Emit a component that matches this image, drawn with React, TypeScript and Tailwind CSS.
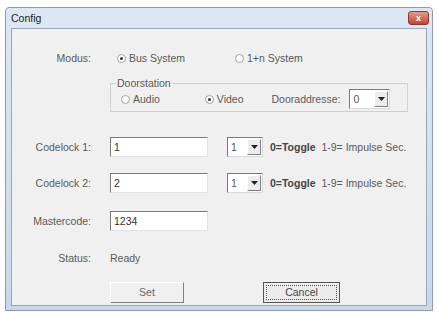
import React from "react";

const Radio: React.FC<{ checked?: boolean; label: string }> = ({ checked, label }) => (
  <div className="flex items-center">
    <span className="flex h-[9px] w-[9px] items-center justify-center rounded-full border border-[#a0a0a0] bg-white">
      {checked && <span className="h-[3px] w-[3px] rounded-full bg-[#333]" />}
    </span>
    <span className="ml-[3px]">{label}</span>
  </div>
);

const Select: React.FC<{ value: string; width: string }> = ({ value, width }) => (
  <div
    className={`flex h-[20px] ${width} items-center border border-t-[#7a7a7a] border-l-[#7a7a7a] border-r-[#d8d8d8] border-b-[#d8d8d8] bg-white pl-[3px]`}
  >
    <span className="flex-1 text-[#555]">{value}</span>
    <span className="mr-[1px] flex h-[16px] w-[14px] items-center justify-center border border-t-[#fff] border-l-[#fff] border-r-[#808080] border-b-[#808080] bg-[#ececec]">
      <svg width="7" height="4" viewBox="0 0 7 4">
        <path d="M0 0h7L3.5 4z" fill="#222" />
      </svg>
    </span>
  </div>
);

const TextBox: React.FC<{ value: string }> = ({ value }) => (
  <div className="flex h-[20px] w-[98px] items-center border border-t-[#7a7a7a] border-l-[#7a7a7a] border-r-[#e2e2e2] border-b-[#e2e2e2] bg-white pl-[3px] text-[#333]">
    {value}
  </div>
);

const Label: React.FC<{ children: React.ReactNode }> = ({ children }) => (
  <div className="w-[79px] shrink-0 text-right">{children}</div>
);

export default function App() {
  return (
    <div
      className="h-[312px] w-[437px] bg-white pl-[5px] pt-[7px] text-[10.5px] leading-[13px] text-[#5a5a5a]"
      style={{ fontFamily: '"Liberation Sans", Arial, sans-serif' }}
    >
      <div className="flex h-[304px] w-[428px] flex-col rounded-t-[4px] border border-[#8c9db3] bg-gradient-to-b from-[#dde8f4] to-[#c8d8ea]">
        {/* Title bar */}
        <div className="flex h-[20px] items-center justify-between pl-[5px] pr-[3px]">
          <span className="text-[#222]">Config</span>
          <span className="flex h-[14px] w-[21px] items-center justify-center rounded-[3px] border border-[#8a3a30] bg-gradient-to-b from-[#e59a8a] to-[#c4412f] text-[9px] font-bold text-white">
            x
          </span>
        </div>

        {/* Client area */}
        <div className="mx-[5px] mb-[4px] flex-1 border border-[#98a8bc] bg-[#f0f0f0]">
          {/* Modus */}
          <div className="mt-[22px] flex h-[14px] items-center">
            <Label>Modus:</Label>
            <div className="ml-[26px] flex items-center">
              <Radio checked label="Bus System" />
              <div className="ml-[50px]">
                <Radio label="1+n System" />
              </div>
            </div>
          </div>

          {/* Doorstation */}
          <fieldset className="ml-[98px] mt-[12px] h-[35px] w-[298px] border border-[#d0d0d0] px-[10px]">
            <legend className="ml-[-5px] px-[1px]">Doorstation</legend>
            <div className="-mt-[1px] flex h-[20px] items-center">
              <Radio label="Audio" />
              <div className="ml-[45px]">
                <Radio checked label="Video" />
              </div>
              <span className="ml-[28px]">Dooraddresse:</span>
              <div className="ml-[9px]">
                <Select value="0" width="w-[41px]" />
              </div>
            </div>
          </fieldset>

          {/* Codelock 1 */}
          <div className="mt-[25px] flex h-[20px] items-center">
            <Label>Codelock 1:</Label>
            <div className="ml-[19px] flex items-center">
              <TextBox value="1" />
              <div className="ml-[19px]">
                <Select value="1" width="w-[36px]" />
              </div>
              <span className="ml-[7px]">
                <span className="font-bold text-[#444]">0=Toggle</span>&nbsp; 1-9= Impulse Sec.
              </span>
            </div>
          </div>

          {/* Codelock 2 */}
          <div className="mt-[16px] flex h-[20px] items-center">
            <Label>Codelock 2:</Label>
            <div className="ml-[19px] flex items-center">
              <TextBox value="2" />
              <div className="ml-[19px]">
                <Select value="1" width="w-[36px]" />
              </div>
              <span className="ml-[7px]">
                <span className="font-bold text-[#444]">0=Toggle</span>&nbsp; 1-9= Impulse Sec.
              </span>
            </div>
          </div>

          {/* Mastercode */}
          <div className="mt-[18px] flex h-[20px] items-center">
            <Label>Mastercode:</Label>
            <div className="ml-[19px]">
              <TextBox value="1234" />
            </div>
          </div>

          {/* Status */}
          <div className="mt-[20px] flex h-[14px] items-center">
            <Label>Status:</Label>
            <span className="ml-[19px]">Ready</span>
          </div>

          {/* Buttons */}
          <div className="ml-[98px] mt-[17px] flex">
            <button className="flex h-[21px] w-[74px] items-center justify-center border border-t-[#fff] border-l-[#fff] border-r-[#808080] border-b-[#808080] bg-[#f0f0f0] text-[#666]">
              Set
            </button>
            <button className="ml-[79px] flex h-[21px] w-[77px] items-center justify-center border border-[#555] bg-[#ececec] p-[2px] text-[#444]">
              <span className="flex h-full w-full items-center justify-center border border-dotted border-[#555]">
                Cancel
              </span>
            </button>
          </div>
        </div>
      </div>
    </div>
  );
}
